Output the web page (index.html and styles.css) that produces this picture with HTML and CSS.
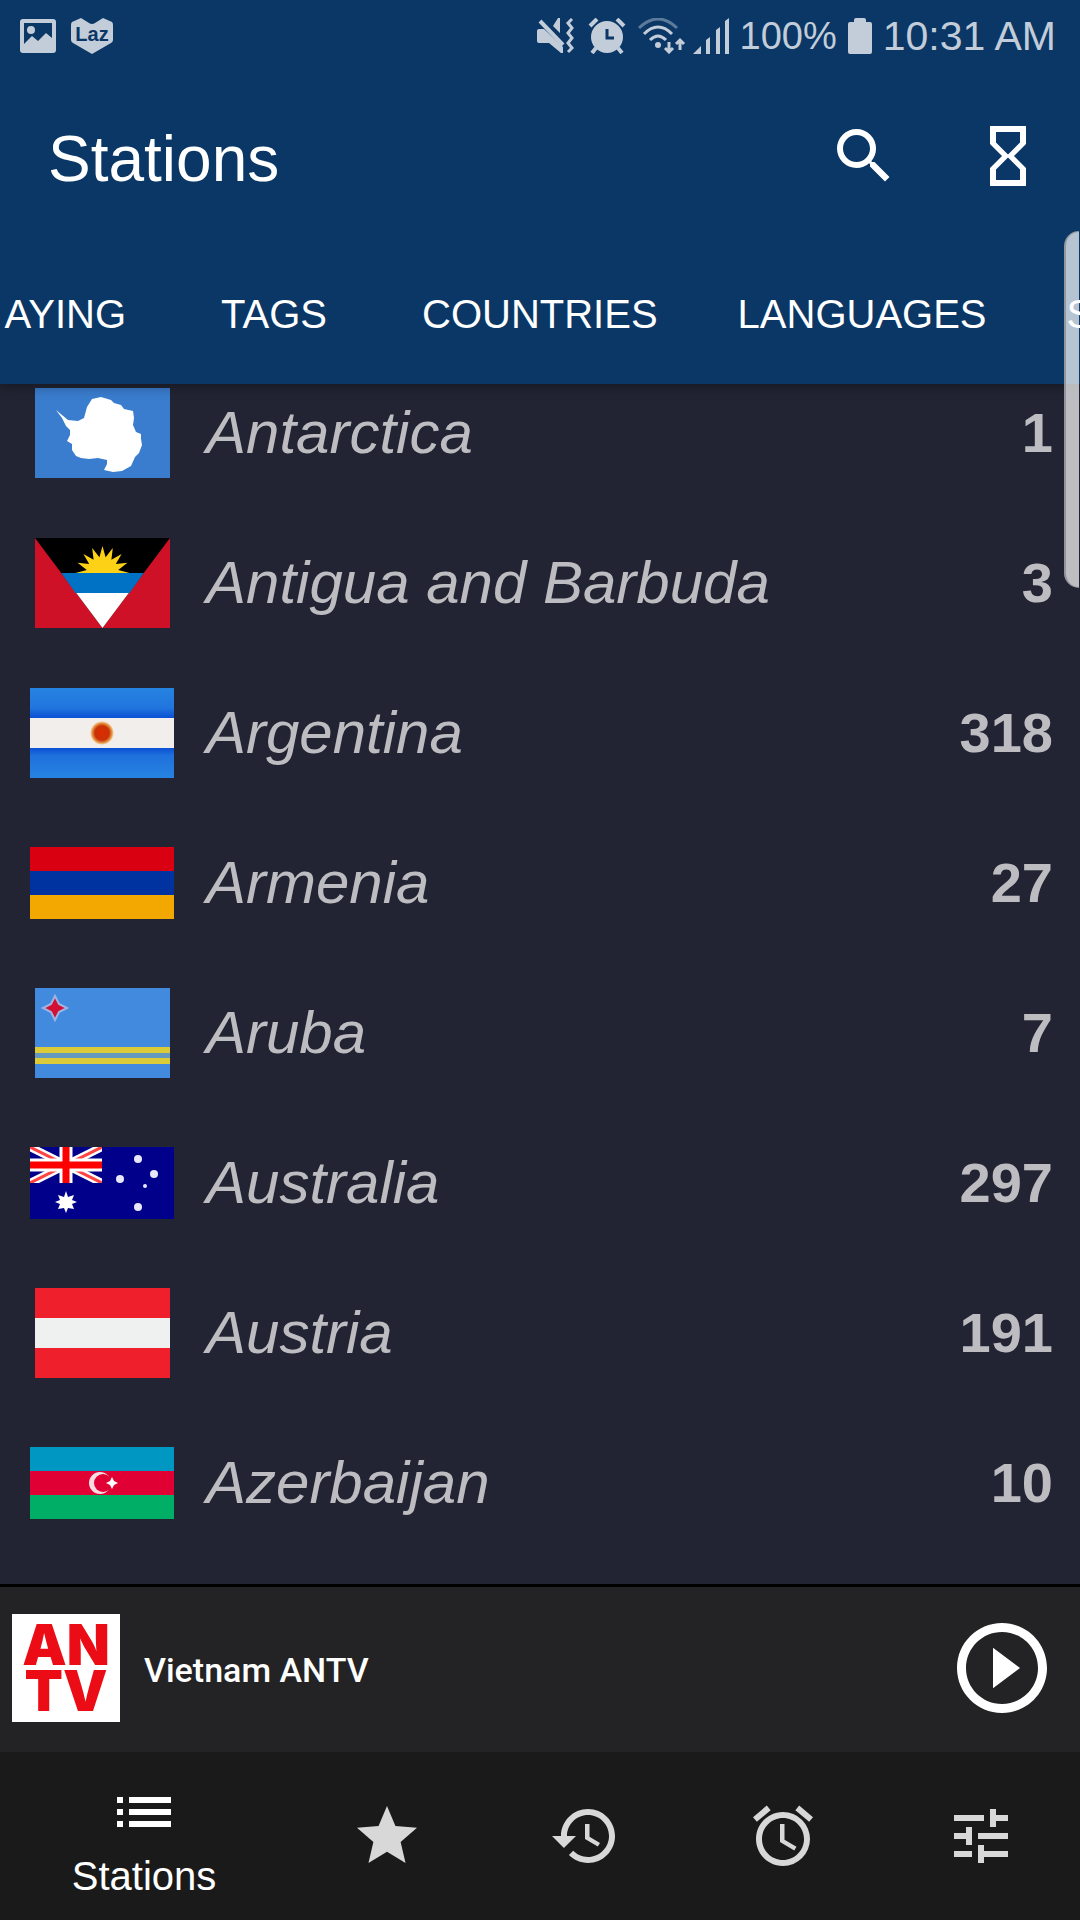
FILE: index.html
```html
<!DOCTYPE html>
<html lang="en">
<head>
<meta charset="utf-8">
<meta name="viewport" content="width=device-width, initial-scale=1">
<title>Stations</title>
<link rel="stylesheet" href="styles.css">
</head>
<body>
<div class="app">
  <header class="header">
    <div class="status">
      <div class="status-group status-left">
        <svg width="36" height="36" viewBox="0 0 36 36" fill="currentColor" aria-hidden="true"><path fill-rule="evenodd" d="M3 1h30a3 3 0 0 1 3 3v28a3 3 0 0 1-3 3H3a3 3 0 0 1-3-3V4a3 3 0 0 1 3-3zm1 4v21l8-8 6 5 8-8 6 5V5zM11 8a4 4 0 1 1 0 8 4 4 0 0 1 0-8z"/></svg>
        <span class="laz"><svg width="42" height="36" viewBox="0 0 42 36" fill="currentColor" aria-hidden="true"><path d="M10 0 18 5q3 2 6 0l8-5 9 4q1 1 1 3v15q0 2-2 3L21 36 2 25q-2-1-2-3V7q0-2 1-3z"/></svg><span class="laz-text">Laz</span></span>
      </div>
      <div class="status-group status-right">
        <svg width="40" height="36" viewBox="0 0 40 36" fill="currentColor" aria-hidden="true"><path d="M2 11h5l19 18v6h-2L12 25H2q-2 0-2-2V13q0-2 2-2zM21 0h2v15l-7-7z"/><path d="m3 3 23 24" fill="none" stroke="currentColor" stroke-width="4"/><path d="m35 1-4 4 4 5-4 5 4 5-4 5 4 5-4 4" fill="none" stroke="currentColor" stroke-width="3"/></svg>
        <svg width="38" height="36" viewBox="0 0 38 36" aria-hidden="true"><path d="m2 8 7-7M36 8l-7-7M8 30l-4 5M30 30l4 5" stroke="currentColor" stroke-width="4"/><circle cx="19" cy="19" r="16" fill="currentColor"/><path d="M19 11v9h7" fill="none" stroke="#0a3765" stroke-width="3"/></svg>
        <svg class="wifi" width="50" height="36" viewBox="0 0 50 36" fill="none" stroke="currentColor" stroke-width="3" aria-hidden="true"><path d="M2 10q19-18 38 0" opacity=".45"/><path d="M7 16q14-14 28 0M13 22q8-8 16 0M32 24v10m-4-4 4 4 4-4M43 32V22m-4 4 4-4 4 4"/><circle cx="21" cy="27" r="3" fill="currentColor" stroke="none"/></svg>
        <svg width="36" height="36" viewBox="0 0 36 36" fill="currentColor" aria-hidden="true"><path d="M0 36 8 28v8zM13 22l4-3v17h-4zM23 12l4-3v27h-4zM32 3l4-3v36h-4z"/></svg>
        <span class="percent">100%</span>
        <svg width="24" height="36" viewBox="0 0 24 36" fill="currentColor" aria-hidden="true"><path d="M8 0h8q2 0 2 2v2h4q2 0 2 2v28q0 2-2 2H2q-2 0-2-2V6q0-2 2-2h4V2q0-2 2-2z"/></svg>
        <span>10:31 AM</span>
      </div>
    </div>
    <div class="toolbar">
      <h1 class="title">Stations</h1>
      <button class="action" type="button" aria-label="Search"><svg class="icon" viewBox="0 0 24 24"><path d="M15.5 14h-.79l-.28-.27A6.471 6.471 0 0 0 16 9.5 6.5 6.5 0 1 0 9.500 16c1.610 0 3.090-.59 4.230-1.570l.27.28v.79l5 4.990L20.490 19l-4.990-5zm-6 0C7.010 14 5 11.990 5 9.500S7.010 5 9.500 5 14 7.010 14 9.500 11.990 14 9.500 14z"/></svg></button>
      <button class="action" type="button" aria-label="Sleep timer"><svg class="icon" viewBox="0 0 24 24"><path d="M6 2v6h.01L6 8.010 10 12l-4 4 .01.01H6V22h12v-5.990h-.01L18 16l-4-4 4-3.990-.01-.01H18V2H6zm10 14.500V20H8v-3.500l4-4 4 4zm-4-5-4-4V4h8v3.500l-4 4z"/></svg></button>
    </div>
    <nav class="tabs" aria-label="Station lists">
      <a class="tab tab-cut" href="#playing" aria-label="Currently playing">AYING</a>
      <a class="tab" href="#tags">TAGS</a>
      <a class="tab" href="#countries">COUNTRIES</a>
      <a class="tab" href="#languages">LANGUAGES</a>
      <a class="tab" href="#search">SEARCH</a>
    </nav>
  </header>

  <main class="content">
    <ul class="list">
      <li><a class="row" href="#aq"><span class="flag"><svg width="135" height="90" viewBox="0 0 135 90"><path fill="#3a7dce" d="M0 0h135v90H0z"/><path fill="#fff" d="m21 22 12 10 10 1 6-3 3-11 5-8 9-2 10 3 3 3 7 2 3 4 9 2 1 7-1 7 3 7 5 2v5l1 6-3 8-4 4-4 9-9 5-9 1-9-2 3-6v-4l-9-2-9 1-8-1-5-2-4-6v-6l-5-3 3-6v-5l-4-4-4-8z"/></svg></span><span class="name">Antarctica</span><span class="count">1</span></a></li>
      <li><a class="row" href="#ag"><span class="flag"><svg width="135" height="90" viewBox="0 0 135 90"><path fill="#ce1126" d="M0 0h135v90H0z"/><path d="M0 0h135L67.500 90z"/><path fill="#0072c6" d="M26.250 35h82.500L94.500 55h-54z"/><path fill="#fff" d="M41.250 55h52.500L67.500 90z"/><path fill="#fcd116" d="m40.500 35 11.300-3.100-9.200-7.200 11.600 1.400-5.800-10.200 10.200 5.800-1.400-11.600 7.200 9.200L67.500 8l3.100 11.300 7.200-9.200-1.400 11.600 10.200-5.800-5.800 10.200 11.600-1.400-9.200 7.200L94.500 35z"/></svg></span><span class="name">Antigua and Barbuda</span><span class="count">3</span></a></li>
      <li><a class="row" href="#ar"><span class="flag"><svg width="144" height="90" viewBox="0 0 144 90"><defs><linearGradient id="ar-blue" x2="0" y2="1"><stop stop-color="#2683e1"/><stop offset=".22" stop-color="#2175dd"/><stop offset=".33" stop-color="#0b51d4"/><stop offset=".67" stop-color="#0b51d4"/><stop offset=".75" stop-color="#1f70dc"/><stop offset="1" stop-color="#2683e1"/></linearGradient><radialGradient id="ar-sun"><stop stop-color="#dd2c00"/><stop offset=".6" stop-color="#c93208"/><stop offset=".85" stop-color="#eca14c"/><stop offset="1" stop-color="#f1eeec"/></radialGradient></defs><path fill="url(#ar-blue)" d="M0 0h144v90H0z"/><path fill="#f1eeec" d="M0 30h144v30H0z"/><circle cx="72" cy="45" r="12" fill="url(#ar-sun)"/></svg></span><span class="name">Argentina</span><span class="count">318</span></a></li>
      <li><a class="row" href="#am"><span class="flag"><svg width="144" height="72" viewBox="0 0 144 72"><path fill="#d90012" d="M0 0h144v24H0z"/><path fill="#0033a0" d="M0 24h144v24H0z"/><path fill="#f2a800" d="M0 48h144v24H0z"/></svg></span><span class="name">Armenia</span><span class="count">27</span></a></li>
      <li><a class="row" href="#aw"><span class="flag"><svg width="135" height="90" viewBox="0 0 135 90"><path fill="#418ade" d="M0 0h135v90H0z"/><path fill="#dccb38" d="M0 59h135v6H0zM0 70h135v6H0z"/><path fill="#6399bd" d="M0 65h135v5H0z"/><path fill="#d21034" stroke="#9fb4e4" stroke-width="2" d="m20 8 4 8 8 4-8 4-4 8-4-8-8-4 8-4z"/></svg></span><span class="name">Aruba</span><span class="count">7</span></a></li>
      <li><a class="row" href="#au"><span class="flag"><svg width="144" height="72" viewBox="0 0 144 72"><defs><clipPath id="canton"><path d="M0 0h72v36H0z"/></clipPath></defs><path fill="#00008b" d="M0 0h144v72H0z"/><g clip-path="url(#canton)" fill="none"><path stroke="#fff" stroke-width="8" d="m0 0 72 36M0 36 72 0"/><path stroke="#f44" stroke-width="3" d="m0 0 72 36M0 36 72 0"/><path stroke="#fff" stroke-width="13" d="M36 0v36M0 18h72"/><path stroke="red" stroke-width="7" d="M36 0v36M0 18h72"/></g><path fill="#fff" d="m36 44 2 6 6-2-2 5 5 2-5 2 2 5-6-1-2 5-2-5-6 1 2-5-5-2 5-2-2-5 6 2z"/><g fill="#e8e8fa"><circle cx="108" cy="12" r="4"/><circle cx="124" cy="27" r="4"/><circle cx="90" cy="32" r="4"/><circle cx="115" cy="39" r="2"/><circle cx="108" cy="60" r="4"/></g></svg></span><span class="name">Australia</span><span class="count">297</span></a></li>
      <li><a class="row" href="#at"><span class="flag"><svg width="135" height="90" viewBox="0 0 135 90"><path fill="#ef1f2c" d="M0 0h135v90H0z"/><path fill="#eff0f0" d="M0 30h135v30H0z"/></svg></span><span class="name">Austria</span><span class="count">191</span></a></li>
      <li><a class="row" href="#az"><span class="flag"><svg width="144" height="72" viewBox="0 0 144 72"><path fill="#0098c3" d="M0 0h144v24H0z"/><path fill="#e00034" d="M0 24h144v24H0z"/><path fill="#00ae65" d="M0 48h144v24H0z"/><circle cx="70" cy="36" r="11" fill="#fbdbe2"/><circle cx="73" cy="36" r="9" fill="#e00034"/><path fill="#fff" d="m82 30 2 4 4 2-4 2-2 4-2-4-4-2 4-2z"/></svg></span><span class="name">Azerbaijan</span><span class="count">10</span></a></li>
    </ul>
  </main>

  <section class="player" aria-label="Now playing">
    <div class="logo">AN TV</div>
    <span class="playing">Vietnam ANTV</span>
    <button class="play" type="button" aria-label="Play"><svg viewBox="0 0 24 24"><path d="M10 16.500l6-4.500-6-4.500v9zM12 2C6.480 2 2 6.480 2 12s4.480 10 10 10 10-4.480 10-10S17.520 2 12 2zm0 18c-4.410 0-8-3.590-8-8s3.590-8 8-8 8 3.590 8 8-3.590 8-8 8z"/></svg></button>
  </section>

  <nav class="bottom" aria-label="Main">
    <a class="dest dest-active" href="#stations"><svg class="icon" viewBox="0 0 24 24" aria-hidden="true"><path d="M3 13h2v-2H3v2zm0 4h2v-2H3v2zm0-8h2V7H3v2zm4 4h14v-2H7v2zm0 4h14v-2H7v2zM7 7v2h14V7H7z"/></svg><span class="dest-label">Stations</span></a>
    <a class="dest" href="#favourites" aria-label="Favourites"><svg class="icon" viewBox="0 0 24 24"><path d="M12 17.270 18.180 21l-1.640-7.030L22 9.240l-7.190-.61L12 2 9.190 8.630 2 9.240l5.460 4.730L5.820 21z"/></svg></a>
    <a class="dest" href="#history" aria-label="History"><svg class="icon" viewBox="0 0 24 24"><path d="M13 3c-4.970 0-9 4.030-9 9H1l3.890 3.890.07.14L9 12H6c0-3.870 3.130-7 7-7s7 3.130 7 7-3.130 7-7 7c-1.930 0-3.680-.79-4.940-2.060l-1.420 1.420C8.270 19.990 10.510 21 13 21c4.970 0 9-4.030 9-9s-4.030-9-9-9zm-1 5v5l4.280 2.540.72-1.210-3.500-2.080V8H12z"/></svg></a>
    <a class="dest" href="#alarm" aria-label="Alarm"><svg class="icon" viewBox="0 0 24 24"><path d="m22 5.720-4.600-3.860-1.290 1.530 4.600 3.860L22 5.720zM7.880 3.390 6.600 1.860 2 5.710l1.290 1.530 4.590-3.850zM12.500 8H11v6l4.750 2.850.75-1.230-4-2.370V8zM12 4c-4.970 0-9 4.030-9 9s4.020 9 9 9a9 9 0 0 0 0-18zm0 16c-3.870 0-7-3.130-7-7s3.130-7 7-7 7 3.130 7 7-3.130 7-7 7z"/></svg></a>
    <a class="dest" href="#settings" aria-label="Settings"><svg class="icon" viewBox="0 0 24 24"><path d="M3 17v2h6v-2H3zM3 5v2h10V5H3zm10 16v-2h8v-2h-8v-2h-2v6h2zM7 9v2H3v2h4v2h2V9H7zm14 4v-2H11v2h10zm-6-4h2V7h4V5h-4V3h-2v6z"/></svg></a>
  </nav>
  <div class="edge-handle"></div>
</div>
</body>
</html>
```
FILE: styles.css
```css
* {
  box-sizing: border-box;
}

body {
  margin: 0;
  background: #222433;
  font-family: "Liberation Sans", Arial, sans-serif;
  color: #fff;
}

a {
  color: inherit;
  text-decoration: none;
}

button {
  border: 0;
  padding: 0;
  background: none;
  color: inherit;
  cursor: pointer;
}

svg {
  display: block;
  flex: none;
}

.app {
  position: relative;
  display: flex;
  flex-direction: column;
  min-height: 100vh;
  overflow: hidden;
}

.icon {
  width: 72px;
  height: 72px;
  fill: currentColor;
}

/* Header */

.header {
  position: relative;
  z-index: 1;
  background: #0a3765;
  box-shadow: 0 2px 12px rgba(0, 0, 0, 0.4);
}

.status {
  display: flex;
  justify-content: space-between;
  align-items: center;
  height: 72px;
  padding: 0 24px 0 20px;
  color: #c2cdd9;
  font-size: 41px;
  line-height: 40px;
}

.status-group {
  display: flex;
  align-items: center;
}

.status-left {
  gap: 15px;
}

.status-right {
  gap: 11px;
}

.wifi {
  margin-right: -5px;
}

.percent {
  font-size: 38px;
}

.laz {
  display: grid;
  place-items: center;
}

.laz > * {
  grid-area: 1 / 1;
}

.laz-text {
  padding-bottom: 4px;
  color: #0a3765;
  font: 700 20px/24px "Liberation Sans", Arial, sans-serif;
}

.toolbar {
  display: flex;
  align-items: center;
  height: 168px;
  padding-left: 48px;
}

.title {
  flex: 1;
  margin: 0;
  padding-top: 6px;
  font-size: 64px;
  font-weight: 400;
  line-height: 72px;
}

.action {
  display: grid;
  place-items: center;
  width: 144px;
  height: 144px;
}

.tabs {
  display: flex;
  height: 144px;
  overflow: hidden;
  font-size: 40px;
}

.tab {
  display: flex;
  flex: none;
  align-items: center;
  justify-content: center;
  min-width: 216px;
  padding: 4px 40px 0;
  white-space: nowrap;
}

.tab-cut {
  justify-content: flex-end;
  width: 166px;
  min-width: 0;
}

/* Country list */

.content {
  flex: 1;
}

.list {
  margin: -26px 0 0;
  padding: 0;
  list-style: none;
}

.row {
  display: flex;
  align-items: center;
  gap: 32px;
  height: 150px;
  padding: 0 27px 0 30px;
  color: #bdbdc1;
  line-height: 64px;
}

.flag {
  display: flex;
  justify-content: center;
  width: 144px;
}

.name {
  flex: 1;
  font-size: 60px;
  font-style: italic;
}

.count {
  font-size: 56px;
  font-weight: 700;
}

/* Player */

.player {
  display: flex;
  align-items: center;
  gap: 24px;
  padding: 27px 24px 30px 12px;
  border-top: 3px solid #000;
  background: #232325;
}

.logo {
  width: 108px;
  height: 108px;
  padding: 8px 4px;
  background: #fff;
  color: #ec0c16;
  font: 900 56px/46px Inter, "Liberation Sans", sans-serif;
  text-align: center;
}

.playing {
  flex: 1;
  padding-top: 4px;
  font-family: Roboto, sans-serif;
  font-size: 34px;
  font-weight: 500;
}

.play,
.play svg {
  width: 108px;
  height: 108px;
  fill: currentColor;
}

/* Bottom navigation */

.bottom {
  display: flex;
  height: 168px;
  background: #1a1a1a;
  color: #d8d8d8;
}

.dest {
  display: flex;
  flex: 11;
  flex-direction: column;
  align-items: center;
  justify-content: center;
}

.dest-active {
  flex: 16;
  gap: 8px;
  color: #fff;
}

.dest-label {
  font-size: 40px;
  line-height: 40px;
}

/* Edge panel handle that floats over the screen */

.edge-handle {
  position: absolute;
  z-index: 2;
  top: 231px;
  right: 1px;
  width: 15px;
  height: 357px;
  border: solid rgba(120, 124, 130, 0.6);
  border-width: 1px 0 1px 2px;
  border-radius: 15px 0 0 15px;
  background: rgba(255, 255, 255, 0.7);
}
```
